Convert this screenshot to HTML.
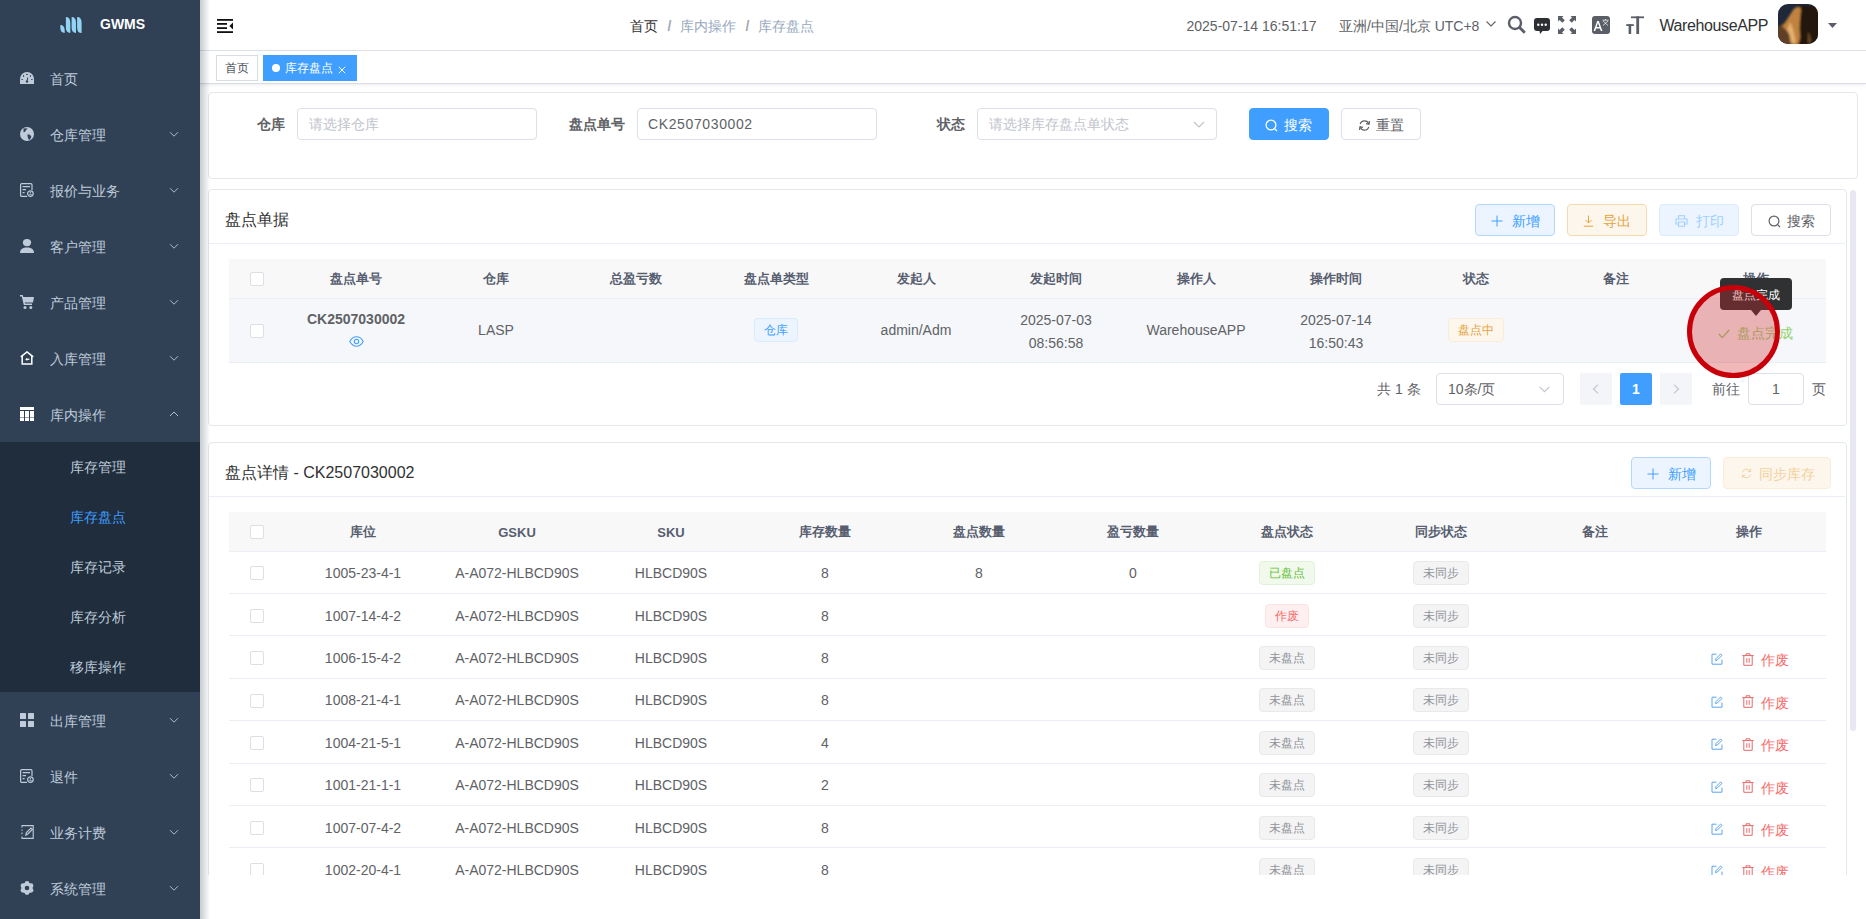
<!DOCTYPE html>
<html><head><meta charset="utf-8">
<style>
*{box-sizing:border-box;margin:0;padding:0}
html,body{width:1866px;height:919px;overflow:hidden;background:#fff;font-family:"Liberation Sans",sans-serif;font-size:14px;color:#606266}
.abs{position:absolute}
#side{position:absolute;left:0;top:0;width:200px;height:919px;background:#304156;z-index:5}
#side .logo{position:absolute;left:0;top:0;width:200px;height:50px}
.mi{position:absolute;left:0;width:200px;height:56px;color:#bfcbd9;font-size:14px}
.mi .ic{position:absolute;left:20px;top:21px;width:14px;height:14px}
.mi .tx{position:absolute;left:50px;top:1px;line-height:56px}
.mi .ch{position:absolute;left:170px;top:24px;width:9px;height:6px}
.sub{position:absolute;left:0;top:442px;width:200px;height:250px;background:#1f2d3d}
.si{position:absolute;left:70px;width:120px;height:50px;line-height:50px;color:#bfcbd9}
#shadow{position:absolute;left:200px;top:0;width:10px;height:919px;background:linear-gradient(to right,rgba(0,21,41,.22),rgba(0,21,41,0));z-index:4}
#nav{position:absolute;left:200px;top:0;width:1666px;height:51px;background:#fff;border-bottom:1px solid #dfe3ea}
#tags{position:absolute;left:200px;top:51px;width:1666px;height:33px;background:#fff;border-bottom:1px solid #d8dce5;box-shadow:0 1px 3px 0 rgba(0,0,0,.08)}
.tag{position:absolute;top:4px;height:26px;line-height:24px;border:1px solid #d8dce5;font-size:12px;color:#495060;padding:0 8px;background:#fff}
.card{position:absolute;background:#fff;border:1px solid #e5e7eb;border-radius:4px}
.lbl{position:absolute;font-weight:bold;color:#606266;font-size:14px;line-height:32px}
.inp{position:absolute;height:32px;border:1px solid #dcdfe6;border-radius:4px;line-height:30px;padding-left:11px;font-size:14px;color:#606266}
.ph{color:#c0c4cc}
.btn{position:absolute;height:32px;border-radius:4px;border:1px solid #dcdfe6;font-size:14px;line-height:30px;padding-top:1px;text-align:center;color:#606266;background:#fff}
table{border-collapse:collapse;table-layout:fixed}
td,th{text-align:center;font-size:14px;color:#606266;font-weight:normal}
th{font-weight:bold;color:#575e6f;font-size:13px;padding-top:2px}
.tg{display:inline-block;height:24px;line-height:22px;padding:0 9px;font-size:12px;border:1px solid;border-radius:4px}
.cb{display:inline-block;position:relative;left:-1px;width:14px;height:14px;border:1px solid #dcdfe6;border-radius:2px;background:#fff;vertical-align:middle}
.r3 td{padding-top:2px}
.r3 td:last-child{padding-top:0}
th .cb,.r3 .cb{top:-1px}
</style></head><body>
<div id="side">
  <div class="logo">
    <svg class="abs" style="left:60px;top:17px" width="22" height="16" viewBox="0 0 22 16" fill="#93d3f3"><path d="M0.3 8 Q4.7 8 4.7 13.72 L4.7 16 Q0.3 16 0.3 10.28 Z"/><path d="M5.9 0 Q10.3 0 10.3 5.720000000000001 L10.3 16 Q5.9 16 5.9 10.28 Z"/><path d="M11.6 0 Q16.0 0 16.0 5.720000000000001 L16.0 16 Q11.6 16 11.6 10.28 Z"/><path d="M17.1 0 Q21.6 0 21.6 5.8500000000000005 L21.6 16 Q17.1 16 17.1 10.149999999999999 Z"/></svg>
    <div class="abs" style="left:100px;top:16px;font-size:14px;font-weight:bold;color:#fff;line-height:16px">GWMS</div>
  </div>
  <div class="mi" style="top:50px"><svg class="abs" style="left:20px;top:22px" width="14" height="12" viewBox="0 0 14 12"><path d="M0 12 V7 A7 7 0 0 1 14 7 V12 Z" fill="#bfcbd9"/><g fill="#304156"><ellipse cx="7" cy="2.4" rx="0.9" ry="0.6"/><ellipse cx="3.6" cy="4" rx="0.6" ry="0.9"/><ellipse cx="10.4" cy="4" rx="0.6" ry="0.9"/><ellipse cx="2.1" cy="7.5" rx="0.9" ry="0.6"/><ellipse cx="11.9" cy="7.5" rx="0.9" ry="0.6"/><circle cx="7" cy="9.6" r="1.2"/><path d="M6.4 9.6 L7.4 5.2 L8.2 5.4 L7.6 9.8 Z"/></g></svg><div class="tx">首页</div></div>
  <div class="mi" style="top:106px"><svg class="abs" style="left:20px;top:21px" width="14" height="14" viewBox="0 0 14 14"><circle cx="7" cy="7" r="7" fill="#bfcbd9"/><path d="M3.4 1.6 L7.6 1.2 L6 3.2 L5 4.8 L3.6 5.4 Z" fill="#304156"/><path d="M7.4 7.6 L9.5 7.4 L11.3 9.2 L10.4 12 L9 13 L7.8 10.6 Z" fill="#304156"/></svg><div class="tx">仓库管理</div><svg class="abs" style="left:169px;top:25px" width="10" height="6" viewBox="0 0 10 6"><path d="M1 1.2 L5 5.2 L9 1.2" stroke="#bfcbd9" stroke-width="0.9" fill="none"/></svg></div>
  <div class="mi" style="top:162px"><svg class="abs" style="left:20px;top:21px" width="14" height="14" viewBox="0 0 14 14" fill="none" stroke="#bfcbd9" stroke-width="1.2"><path d="M7 13.4 H1.8 A1.2 1.2 0 0 1 0.6 12.2 V1.8 A1.2 1.2 0 0 1 1.8 0.6 H10.8 A1.2 1.2 0 0 1 12 1.8 V7"/><path d="M2.6 3.6 H10 M2.6 6.6 H6 M2.6 9.6 H4.6"/><circle cx="10.4" cy="10.6" r="2.8"/><circle cx="10.4" cy="9.8" r="0.8" fill="#bfcbd9" stroke="none"/><path d="M8.8 12.2 A1.8 1.4 0 0 1 12 12.2" stroke-width="0.9"/></svg><div class="tx">报价与业务</div><svg class="abs" style="left:169px;top:25px" width="10" height="6" viewBox="0 0 10 6"><path d="M1 1.2 L5 5.2 L9 1.2" stroke="#bfcbd9" stroke-width="0.9" fill="none"/></svg></div>
  <div class="mi" style="top:218px"><svg class="abs" style="left:20px;top:21px" width="14" height="14" viewBox="0 0 14 14" fill="#bfcbd9"><ellipse cx="7" cy="3.6" rx="4.1" ry="3.6"/><path d="M0 14 C0 10 3 8.4 7 8.4 C11 8.4 14 10 14 14 Z"/></svg><div class="tx">客户管理</div><svg class="abs" style="left:169px;top:25px" width="10" height="6" viewBox="0 0 10 6"><path d="M1 1.2 L5 5.2 L9 1.2" stroke="#bfcbd9" stroke-width="0.9" fill="none"/></svg></div>
  <div class="mi" style="top:274px"><svg class="abs" style="left:20px;top:21px" width="14" height="14" viewBox="0 0 14 14" fill="#bfcbd9"><path d="M0 0 H2.6 L3.4 2 H14 L13 7.4 H4.8 L5 8.6 H12 V10 H3.8 L1.8 1.4 H0 Z"/><circle cx="5" cy="12.4" r="1.5"/><circle cx="10.8" cy="12.4" r="1.5"/></svg><div class="tx">产品管理</div><svg class="abs" style="left:169px;top:25px" width="10" height="6" viewBox="0 0 10 6"><path d="M1 1.2 L5 5.2 L9 1.2" stroke="#bfcbd9" stroke-width="0.9" fill="none"/></svg></div>
  <div class="mi" style="top:330px"><svg class="abs" style="left:20px;top:21px" width="14" height="14" viewBox="0 0 14 14" fill="none" stroke="#fff" stroke-width="1.5"><path d="M0.8 5.8 L7 0.9 L13.2 5.8"/><path d="M2.2 4.8 V13 H11.8 V4.8"/><path d="M5.2 8.3 L7.2 6.7 V9.9 Z" fill="#fff" stroke="none"/><path d="M7 8.3 H9.4" stroke-width="1.2"/></svg><div class="tx">入库管理</div><svg class="abs" style="left:169px;top:25px" width="10" height="6" viewBox="0 0 10 6"><path d="M1 1.2 L5 5.2 L9 1.2" stroke="#bfcbd9" stroke-width="0.9" fill="none"/></svg></div>
  <div class="mi" style="top:386px"><svg class="abs" style="left:20px;top:21px" width="14" height="14" viewBox="0 0 14 14" fill="#fff"><rect x="0" y="0" width="14" height="3"/><rect x="0" y="4" width="4" height="6"/><rect x="5" y="4" width="4" height="6"/><rect x="10" y="4" width="4" height="6"/><rect x="0" y="10.5" width="4" height="3.5"/><rect x="5" y="10.5" width="4" height="3.5"/><rect x="10" y="10.5" width="4" height="3.5"/></svg><div class="tx">库内操作</div><svg class="abs" style="left:169px;top:25px" width="10" height="6" viewBox="0 0 10 6"><path d="M1 5 L5 1 L9 5" stroke="#bfcbd9" stroke-width="0.9" fill="none"/></svg></div>
  <div class="sub">
    <div class="si" style="top:0">库存管理</div>
    <div class="si" style="top:50px;color:#409eff">库存盘点</div>
    <div class="si" style="top:100px">库存记录</div>
    <div class="si" style="top:150px">库存分析</div>
    <div class="si" style="top:200px">移库操作</div>
  </div>
  <div class="mi" style="top:692px"><svg class="abs" style="left:20px;top:21px" width="14" height="14" viewBox="0 0 14 14" fill="#bfcbd9"><rect x="0" y="0" width="6" height="6" rx="0.6"/><rect x="8" y="0" width="6" height="6" rx="0.6"/><rect x="0" y="8" width="6" height="6" rx="0.6"/><rect x="8" y="8" width="6" height="6" rx="0.6"/></svg><div class="tx">出库管理</div><svg class="abs" style="left:169px;top:25px" width="10" height="6" viewBox="0 0 10 6"><path d="M1 1.2 L5 5.2 L9 1.2" stroke="#bfcbd9" stroke-width="0.9" fill="none"/></svg></div>
  <div class="mi" style="top:748px"><svg class="abs" style="left:20px;top:21px" width="14" height="14" viewBox="0 0 14 14" fill="none" stroke="#bfcbd9" stroke-width="1.2"><path d="M7 13.4 H1.8 A1.2 1.2 0 0 1 0.6 12.2 V1.8 A1.2 1.2 0 0 1 1.8 0.6 H10.8 A1.2 1.2 0 0 1 12 1.8 V7"/><path d="M2.6 3.6 H10 M2.6 6.6 H6 M2.6 9.6 H4.6"/><circle cx="10.4" cy="10.6" r="2.8"/><circle cx="10.4" cy="9.8" r="0.8" fill="#bfcbd9" stroke="none"/><path d="M8.8 12.2 A1.8 1.4 0 0 1 12 12.2" stroke-width="0.9"/></svg><div class="tx">退件</div><svg class="abs" style="left:169px;top:25px" width="10" height="6" viewBox="0 0 10 6"><path d="M1 1.2 L5 5.2 L9 1.2" stroke="#bfcbd9" stroke-width="0.9" fill="none"/></svg></div>
  <div class="mi" style="top:804px"><svg class="abs" style="left:21px;top:21px" width="13" height="14" viewBox="0 0 13 14" fill="none" stroke="#bfcbd9" stroke-width="1.1"><path d="M1 2.5 V0.6 H12.2 V13.4 H1 V11.5"/><path d="M1 4.5 V5.8 M1 7.6 V9.2"/><path d="M4.8 10.2 L5.4 7.6 L10 3 L11.4 4.4 L6.8 9 Z"/></svg><div class="tx">业务计费</div><svg class="abs" style="left:169px;top:25px" width="10" height="6" viewBox="0 0 10 6"><path d="M1 1.2 L5 5.2 L9 1.2" stroke="#bfcbd9" stroke-width="0.9" fill="none"/></svg></div>
  <div class="mi" style="top:860px"><svg class="abs" style="left:20px;top:21px" width="14" height="14" viewBox="0 0 14 14"><defs><mask id="gm"><circle cx="7" cy="7" r="5.6" fill="#fff"/><circle cx="7.00" cy="11.60" r="2.4" fill="#fff"/><circle cx="3.02" cy="9.30" r="2.4" fill="#fff"/><circle cx="3.02" cy="4.70" r="2.4" fill="#fff"/><circle cx="7.00" cy="2.40" r="2.4" fill="#fff"/><circle cx="10.98" cy="4.70" r="2.4" fill="#fff"/><circle cx="10.98" cy="9.30" r="2.4" fill="#fff"/><circle cx="7" cy="7" r="2.3" fill="#000"/></mask></defs><rect width="14" height="14" fill="#bfcbd9" mask="url(#gm)"/></svg><div class="tx">系统管理</div><svg class="abs" style="left:169px;top:25px" width="10" height="6" viewBox="0 0 10 6"><path d="M1 1.2 L5 5.2 L9 1.2" stroke="#bfcbd9" stroke-width="0.9" fill="none"/></svg></div>
</div>
<div id="shadow"></div>
<div id="nav">
  <svg class="abs" style="left:17px;top:19px" width="16" height="14" viewBox="0 0 16 14"><rect x="0" y="0" width="16" height="1.8" fill="#111"/><rect x="0" y="4" width="10" height="1.8" fill="#111"/><rect x="0" y="8.2" width="10" height="1.8" fill="#111"/><rect x="0" y="12.2" width="16" height="1.8" fill="#111"/><path d="M16 3.6 L12.4 7 L16 10.4 Z" fill="#111"/></svg>
  <div class="abs" style="left:430px;top:18px;line-height:16px;font-size:14px;white-space:nowrap"><span style="color:#303133">首页</span><span style="color:#a4a8ae;font-weight:bold;margin:0 9px 0 9.5px">/</span><span style="color:#97a8be">库内操作</span><span style="color:#a4a8ae;font-weight:bold;margin:0 9px">/</span><span style="color:#97a8be">库存盘点</span></div>
  <div class="abs" style="left:986.5px;top:18px;line-height:16px;font-size:14px;color:#606266;white-space:nowrap">2025-07-14 16:51:17</div>
  <div class="abs" style="left:1139px;top:18px;line-height:16px;font-size:14px;color:#606266;white-space:nowrap">亚洲/中国/北京 UTC+8</div>
  <svg class="abs" style="left:1286px;top:21px" width="10" height="6" viewBox="0 0 10 6"><path d="M0.5 0.5 L5 5 L9.5 0.5" stroke="#606266" stroke-width="1.1" fill="none"/></svg>
  <svg class="abs" style="left:1307px;top:15px" width="20" height="20" viewBox="0 0 20 20"><circle cx="8" cy="8" r="6" stroke="#5a5e66" stroke-width="2.4" fill="none"/><path d="M12.3 12.3 L17.8 17.8" stroke="#5a5e66" stroke-width="2.8" stroke-linecap="butt"/></svg>
  <svg class="abs" style="left:1334px;top:18px" width="16" height="16" viewBox="0 0 16 16"><rect x="0" y="0" width="16" height="13" rx="3" fill="#2d2f33"/><path d="M5.5 12.5 L6 16 L9 12.5 Z" fill="#2d2f33"/><circle cx="4.3" cy="6.8" r="1.2" fill="#fff"/><circle cx="8" cy="6.8" r="1.2" fill="#fff"/><circle cx="11.7" cy="6.8" r="1.2" fill="#fff"/></svg>
  <svg class="abs" style="left:1358px;top:16px" width="18" height="18" viewBox="0 0 18 18" fill="#5a5e66"><path d="M0 0 H5.5 L4 1.5 L6.8 4.3 L4.3 6.8 L1.5 4 L0 5.5 Z"/><path d="M18 0 V5.5 L16.5 4 L13.7 6.8 L11.2 4.3 L14 1.5 L12.5 0 Z"/><path d="M0 18 V12.5 L1.5 14 L4.3 11.2 L6.8 13.7 L4 16.5 L5.5 18 Z"/><path d="M18 18 H12.5 L14 16.5 L11.2 13.7 L13.7 11.2 L16.5 14 L18 12.5 Z"/></svg>
  <svg class="abs" style="left:1392px;top:16px" width="18" height="18" viewBox="0 0 18 18"><rect x="0" y="0" width="18" height="18" rx="3" fill="#5a5e66"/><path d="M1.6 15 L5.2 5 L6.8 5 L10.4 15 L8.8 15 L7.9 12.4 L4.1 12.4 L3.2 15 Z M4.6 11 L7.4 11 L6 7 Z" fill="#fff"/><path d="M10.5 4.2 H16.5 M13.5 3 V4.2 M11 5 L16 9.5 M16 5 L11 9.5" stroke="#fff" stroke-width="0.7" fill="none"/></svg>
  <svg class="abs" style="left:1425px;top:16px" width="20" height="18" viewBox="0 0 20 18" fill="#5a5e66"><rect x="6" y="0.4" width="13" height="1.8"/><rect x="11.3" y="0.4" width="2.8" height="17.6"/><rect x="1.2" y="8.2" width="7.6" height="1.8"/><rect x="3.6" y="8.2" width="2.6" height="9.8"/></svg>
  <div class="abs" style="left:1459.5px;top:17px;line-height:18px;font-size:16px;letter-spacing:-0.4px;color:#303133;white-space:nowrap">WarehouseAPP</div>
  <svg class="abs" style="left:1578px;top:4px" width="40" height="40" viewBox="0 0 40 40"><defs><clipPath id="avc"><rect width="40" height="40" rx="10"/></clipPath><filter id="avb" x="-20%" y="-20%" width="140%" height="140%"><feGaussianBlur stdDeviation="1.3"/></filter></defs><g clip-path="url(#avc)"><rect width="40" height="40" fill="#1f2838"/><g filter="url(#avb)"><path d="M-2 24 L6 19 L16 6 L24 2 L42 2 L42 42 L-2 42 Z" fill="#5e4026"/><path d="M19 2 L42 2 L42 42 L20 42 Z" fill="#22170e"/><path d="M15 6 C18 2 23 2 23 6 C22 14 21 22 22 32 C22 38 20 42 16 42 L12 38 C12 32 11 28 8 26 L4 22 L7 19 Z" fill="#c0823f"/><path d="M12 18 C15 22 16 30 18 38 L14 40 C13 34 11 28 9 26 Z" fill="#e6b070"/><path d="M30 28 C32 30 33 34 33 38 L30 40 Z" fill="#6a4a26"/></g></g></g></svg>
  <svg class="abs" style="left:1628px;top:23px" width="9" height="5" viewBox="0 0 9 5"><path d="M0 0 H9 L4.5 5 Z" fill="#5a5e66"/></svg>
</div>
<div id="tags">
  <div class="tag" style="left:16px">首页</div>
  <div class="tag" style="left:63px;width:94px;background:#409eff;border-color:#409eff;color:#fff;padding-left:21px">库存盘点<span class="abs" style="left:8px;top:8px;width:8px;height:8px;border-radius:50%;background:#fff"></span><svg class="abs" style="left:74px;top:9.5px" width="8" height="8" viewBox="0 0 8 8"><path d="M0.8 0.8 L7.2 7.2 M7.2 0.8 L0.8 7.2" stroke="#fff" stroke-width="1"/></svg></div>
</div>
<div class="card" style="left:208px;top:92px;width:1650px;height:87px">
  <div class="lbl" style="left:48px;top:15px">仓库</div>
  <div class="inp ph" style="left:88px;top:15px;width:240px">请选择仓库</div>
  <div class="lbl" style="left:360px;top:15px">盘点单号</div>
  <div class="inp" style="left:428px;top:15px;width:240px;padding-left:10px;letter-spacing:0.62px">CK2507030002</div>
  <div class="lbl" style="left:728px;top:15px">状态</div>
  <div class="inp ph" style="left:768px;top:15px;width:240px">请选择库存盘点单状态<svg class="abs" style="left:215px;top:12px" width="12" height="7" viewBox="0 0 12 7"><path d="M1 1 L6 6 L11 1" stroke="#c0c4cc" stroke-width="1.2" fill="none"/></svg></div>
  <div class="btn" style="left:1040px;top:15px;width:80px;background:#409eff;border-color:#409eff;color:#fff"><svg style="vertical-align:-2px;margin-right:6px;margin-left:-1px" width="13" height="13" viewBox="0 0 13 13"><circle cx="6" cy="6" r="4.9" stroke="#fff" stroke-width="1.3" fill="none"/><path d="M9.6 9.6 L12 12" stroke="#fff" stroke-width="1.3"/></svg>搜索</div>
  <div class="btn" style="left:1132px;top:15px;width:80px"><svg style="vertical-align:-2px;margin-right:5px" width="13" height="13" viewBox="0 0 13 13"><path d="M2.2 5.2 A4.5 4.5 0 0 1 10.8 5" stroke="#606266" stroke-width="1.2" fill="none"/><path d="M10.8 7.8 A4.5 4.5 0 0 1 2.2 8" stroke="#606266" stroke-width="1.2" fill="none"/><path d="M11.5 2 L11 5.3 L8 4.6" stroke="#606266" stroke-width="1.2" fill="none"/><path d="M1.5 11 L2 7.7 L5 8.4" stroke="#606266" stroke-width="1.2" fill="none"/></svg>重置</div>
</div>
<div id="scroll" class="abs" style="left:208px;top:189px;width:1649px;height:686px;overflow:hidden">
  <div class="abs" style="left:1642px;top:1px;width:6px;height:541px;border-radius:3px;background:#e7e8f1"></div>
  <div class="card" style="left:0;top:0;width:1639px;height:237px">
  <div class="abs" style="left:16px;top:20px;font-size:16px;line-height:20px;color:#303133">盘点单据</div>
  <div class="abs" style="left:0;top:53px;width:1636px;height:1px;background:#ebeef5"></div>
  <div class="btn" style="left:1266px;top:14px;width:80px;background:#ecf5ff;border-color:#b3d8ff;color:#409eff"><svg style="vertical-align:-1px;margin-right:9px" width="12" height="12" viewBox="0 0 12 12"><path d="M6 0.5 V11.5 M0.5 6 H11.5" stroke="#409eff" stroke-width="1" fill="none"/></svg>新增</div>
  <div class="btn" style="left:1358px;top:14px;width:80px;background:#fdf6ec;border-color:#f5dab1;color:#e6a23c"><svg style="vertical-align:-1px;margin-right:9px" width="11" height="12" viewBox="0 0 11 12"><path d="M5.5 0.5 V8 M2.5 5 L5.5 8 L8.5 5 M0.8 11.2 H10.2" stroke="#e6a23c" stroke-width="1" fill="none"/></svg>导出</div>
  <div class="btn" style="left:1450px;top:14px;width:80px;background:#ecf5ff;border-color:#d9ecff;color:#a0cfff"><svg style="vertical-align:-1px;margin-right:8px" width="13" height="12" viewBox="0 0 13 12"><path d="M3.5 4 V0.8 H9.5 V4 M3.5 9 H1 V4 H12 V9 H9.5 M3.5 7 H9.5 V11.3 H3.5 Z" stroke="#a0cfff" stroke-width="1.1" fill="none"/></svg>打印</div>
  <div class="btn" style="left:1542px;top:14px;width:80px"><svg style="vertical-align:-2px;margin-right:6px" width="13" height="13" viewBox="0 0 13 13"><circle cx="6" cy="6" r="4.9" stroke="#606266" stroke-width="1.2" fill="none"/><path d="M9.6 9.6 L12 12" stroke="#606266" stroke-width="1.2"/></svg>搜索</div>
  <table class="abs" style="left:20px;top:69px;width:1597px">
    <colgroup><col style="width:57px"><col style="width:140px"><col style="width:140px"><col style="width:140px"><col style="width:140px"><col style="width:140px"><col style="width:140px"><col style="width:140px"><col style="width:140px"><col style="width:140px"><col style="width:140px"><col style="width:140px"></colgroup>
    <tr style="height:39px;background:#f8f8f9"><th><span class="cb"></span></th><th>盘点单号</th><th>仓库</th><th>总盈亏数</th><th>盘点单类型</th><th>发起人</th><th>发起时间</th><th>操作人</th><th>操作时间</th><th>状态</th><th>备注</th><th>操作</th></tr>
    <tr style="height:64px;background:#f5f7fa;border-top:1px solid #ebeef5;border-bottom:1px solid #ebeef5">
      <td><span class="cb"></span></td>
      <td style="padding-top:2px"><div style="font-weight:bold;line-height:16px;color:#606266;position:relative;top:-5px">CK2507030002</div><svg style="display:block;margin:4px auto 0" width="15" height="11" viewBox="0 0 15 11"><path d="M0.8 5.5 C3 1.5 5.2 0.8 7.5 0.8 C9.8 0.8 12 1.5 14.2 5.5 C12 9.5 9.8 10.2 7.5 10.2 C5.2 10.2 3 9.5 0.8 5.5 Z" stroke="#409eff" stroke-width="1.1" fill="none"/><circle cx="7.5" cy="5.5" r="2.2" stroke="#409eff" stroke-width="1.1" fill="none"/></svg></td>
      <td>LASP</td>
      <td></td>
      <td><span class="tg" style="background:#ecf5ff;border-color:#d9ecff;color:#409eff">仓库</span></td>
      <td>admin/Adm</td>
      <td style="line-height:23px;padding-top:3px">2025-07-03<br>08:56:58</td>
      <td>WarehouseAPP</td>
      <td style="line-height:23px;padding-top:3px">2025-07-14<br>16:50:43</td>
      <td><span class="tg" style="background:#fdf6ec;border-color:#faecd8;color:#e6a23c">盘点中</span></td>
      <td></td>
      <td></td>
    </tr>
  </table>
  <div class="abs" style="left:1168px;top:189px;line-height:20px;font-size:14px;color:#606266">共 1 条</div>
  <div class="inp" style="left:1227px;top:183px;width:128px;height:32px;font-size:14px">10条/页<svg class="abs" style="left:102px;top:12px" width="11" height="7" viewBox="0 0 11 7"><path d="M0.6 0.8 L5.5 5.7 L10.4 0.8" stroke="#c0c4cc" stroke-width="1.1" fill="none"/></svg></div>
  <div class="abs" style="left:1371px;top:183px;width:32px;height:32px;border-radius:2px;background:#f4f5f8"><svg class="abs" style="left:12px;top:11px" width="7" height="10" viewBox="0 0 7 10"><path d="M6 0.6 L1.4 5 L6 9.4" stroke="#c0c4cc" stroke-width="1.1" fill="none"/></svg></div>
  <div class="abs" style="left:1411px;top:183px;width:32px;height:32px;border-radius:2px;background:#409eff;color:#fff;font-weight:bold;text-align:center;line-height:32px;font-size:14px">1</div>
  <div class="abs" style="left:1451px;top:183px;width:32px;height:32px;border-radius:2px;background:#f4f5f8"><svg class="abs" style="left:13px;top:11px" width="7" height="10" viewBox="0 0 7 10"><path d="M1 0.6 L5.6 5 L1 9.4" stroke="#c0c4cc" stroke-width="1.1" fill="none"/></svg></div>
  <div class="abs" style="left:1503px;top:189px;line-height:20px;font-size:14px;color:#606266">前往</div>
  <div class="inp" style="left:1539px;top:183px;width:56px;height:32px;text-align:center;padding:0">1</div>
  <div class="abs" style="left:1603px;top:189px;line-height:20px;font-size:14px;color:#606266">页</div>
</div>
  <div class="card" style="left:0;top:253px;width:1639px;height:600px">
  <div class="abs" style="left:16px;top:20px;font-size:16px;line-height:20px;color:#303133">盘点详情 - CK2507030002</div>
  <div class="abs" style="left:0;top:53px;width:1636px;height:1px;background:#ebeef5"></div>
  <div class="btn" style="left:1422px;top:14px;width:80px;background:#ecf5ff;border-color:#b3d8ff;color:#409eff"><svg style="vertical-align:-1px;margin-right:9px" width="12" height="12" viewBox="0 0 12 12"><path d="M6 0.5 V11.5 M0.5 6 H11.5" stroke="#409eff" stroke-width="1" fill="none"/></svg>新增</div>
  <div class="btn" style="left:1514px;top:14px;width:108px;background:#fdf6ec;border-color:#faecd8;color:#f3d19e"><svg style="vertical-align:0px;margin-left:1px;margin-right:7px" width="11" height="11" viewBox="0 0 11 11"><path d="M1.2 4.4 A4.4 4.4 0 0 1 9.2 3.2" stroke="#f3d19e" stroke-width="1" fill="none"/><path d="M9.8 6.6 A4.4 4.4 0 0 1 1.8 7.8" stroke="#f3d19e" stroke-width="1" fill="none"/><path d="M9.6 0.8 V3.6 H6.8" stroke="#f3d19e" stroke-width="1" fill="none"/><path d="M1.4 10.2 V7.4 H4.2" stroke="#f3d19e" stroke-width="1" fill="none"/></svg>同步库存</div>
  <table class="abs" style="left:20px;top:69px;width:1597px">
    <colgroup><col style="width:57px"><col style="width:154px"><col style="width:154px"><col style="width:154px"><col style="width:154px"><col style="width:154px"><col style="width:154px"><col style="width:154px"><col style="width:154px"><col style="width:154px"><col style="width:154px"></colgroup>
    <tr style="height:39px;background:#f8f8f9;border-bottom:1px solid #ebeef5"><th><span class="cb"></span></th><th>库位</th><th style="font-weight:bold">GSKU</th><th style="font-weight:bold">SKU</th><th>库存数量</th><th>盘点数量</th><th>盈亏数量</th><th>盘点状态</th><th>同步状态</th><th>备注</th><th>操作</th></tr>
    <tr class="r3" style="height:42.43px;border-bottom:1px solid #ebeef5"><td><span class="cb"></span></td><td>1005-23-4-1</td><td>A-A072-HLBCD90S</td><td>HLBCD90S</td><td>8</td><td>8</td><td>0</td><td><span class="tg" style="background:#f0f9eb;border-color:#e1f3d8;color:#67c23a">已盘点</span></td><td><span class="tg" style="background:#f4f4f5;border-color:#e9e9eb;color:#909399">未同步</span></td><td></td><td style="text-align:left;padding:0;vertical-align:top;white-space:nowrap"></td></tr><tr class="r3" style="height:42.43px;border-bottom:1px solid #ebeef5"><td><span class="cb"></span></td><td>1007-14-4-2</td><td>A-A072-HLBCD90S</td><td>HLBCD90S</td><td>8</td><td></td><td></td><td><span class="tg" style="background:#fef0f0;border-color:#fde2e2;color:#f56c6c">作废</span></td><td><span class="tg" style="background:#f4f4f5;border-color:#e9e9eb;color:#909399">未同步</span></td><td></td><td style="text-align:left;padding:0;vertical-align:top;white-space:nowrap"></td></tr><tr class="r3" style="height:42.43px;border-bottom:1px solid #ebeef5"><td><span class="cb"></span></td><td>1006-15-4-2</td><td>A-A072-HLBCD90S</td><td>HLBCD90S</td><td>8</td><td></td><td></td><td><span class="tg" style="background:#f4f4f5;border-color:#e9e9eb;color:#909399">未盘点</span></td><td><span class="tg" style="background:#f4f4f5;border-color:#e9e9eb;color:#909399">未同步</span></td><td></td><td style="text-align:left;padding:0;vertical-align:top;white-space:nowrap"><div style="position:relative;height:40px"><svg class="abs" style="left:38.5px;top:17px" width="12" height="12" viewBox="0 0 12 12"><path d="M5.5 1.2 H1 V11.2 H11 V6.6" stroke="#5aa5f0" stroke-width="1" fill="none"/><path d="M4.6 7.6 L5 5.6 L9.6 1 L11 2.4 L6.4 7 Z" stroke="#5aa5f0" stroke-width="1" fill="none"/></svg><svg class="abs" style="left:70px;top:16.5px" width="12" height="13" viewBox="0 0 12 13"><path d="M0.3 2.6 H11.7 M4 2.6 V0.8 H8 V2.6 M1.8 2.6 V12.3 H10.2 V2.6 M4.8 5.2 V9.8 M7.2 5.2 V9.8" stroke="#e46a6a" stroke-width="1" fill="none"/></svg><span class="abs" style="left:88.5px;top:16px;line-height:16px;color:#f56c6c">作废</span></div></td></tr><tr class="r3" style="height:42.43px;border-bottom:1px solid #ebeef5"><td><span class="cb"></span></td><td>1008-21-4-1</td><td>A-A072-HLBCD90S</td><td>HLBCD90S</td><td>8</td><td></td><td></td><td><span class="tg" style="background:#f4f4f5;border-color:#e9e9eb;color:#909399">未盘点</span></td><td><span class="tg" style="background:#f4f4f5;border-color:#e9e9eb;color:#909399">未同步</span></td><td></td><td style="text-align:left;padding:0;vertical-align:top;white-space:nowrap"><div style="position:relative;height:40px"><svg class="abs" style="left:38.5px;top:17px" width="12" height="12" viewBox="0 0 12 12"><path d="M5.5 1.2 H1 V11.2 H11 V6.6" stroke="#5aa5f0" stroke-width="1" fill="none"/><path d="M4.6 7.6 L5 5.6 L9.6 1 L11 2.4 L6.4 7 Z" stroke="#5aa5f0" stroke-width="1" fill="none"/></svg><svg class="abs" style="left:70px;top:16.5px" width="12" height="13" viewBox="0 0 12 13"><path d="M0.3 2.6 H11.7 M4 2.6 V0.8 H8 V2.6 M1.8 2.6 V12.3 H10.2 V2.6 M4.8 5.2 V9.8 M7.2 5.2 V9.8" stroke="#e46a6a" stroke-width="1" fill="none"/></svg><span class="abs" style="left:88.5px;top:16px;line-height:16px;color:#f56c6c">作废</span></div></td></tr><tr class="r3" style="height:42.43px;border-bottom:1px solid #ebeef5"><td><span class="cb"></span></td><td>1004-21-5-1</td><td>A-A072-HLBCD90S</td><td>HLBCD90S</td><td>4</td><td></td><td></td><td><span class="tg" style="background:#f4f4f5;border-color:#e9e9eb;color:#909399">未盘点</span></td><td><span class="tg" style="background:#f4f4f5;border-color:#e9e9eb;color:#909399">未同步</span></td><td></td><td style="text-align:left;padding:0;vertical-align:top;white-space:nowrap"><div style="position:relative;height:40px"><svg class="abs" style="left:38.5px;top:17px" width="12" height="12" viewBox="0 0 12 12"><path d="M5.5 1.2 H1 V11.2 H11 V6.6" stroke="#5aa5f0" stroke-width="1" fill="none"/><path d="M4.6 7.6 L5 5.6 L9.6 1 L11 2.4 L6.4 7 Z" stroke="#5aa5f0" stroke-width="1" fill="none"/></svg><svg class="abs" style="left:70px;top:16.5px" width="12" height="13" viewBox="0 0 12 13"><path d="M0.3 2.6 H11.7 M4 2.6 V0.8 H8 V2.6 M1.8 2.6 V12.3 H10.2 V2.6 M4.8 5.2 V9.8 M7.2 5.2 V9.8" stroke="#e46a6a" stroke-width="1" fill="none"/></svg><span class="abs" style="left:88.5px;top:16px;line-height:16px;color:#f56c6c">作废</span></div></td></tr><tr class="r3" style="height:42.43px;border-bottom:1px solid #ebeef5"><td><span class="cb"></span></td><td>1001-21-1-1</td><td>A-A072-HLBCD90S</td><td>HLBCD90S</td><td>2</td><td></td><td></td><td><span class="tg" style="background:#f4f4f5;border-color:#e9e9eb;color:#909399">未盘点</span></td><td><span class="tg" style="background:#f4f4f5;border-color:#e9e9eb;color:#909399">未同步</span></td><td></td><td style="text-align:left;padding:0;vertical-align:top;white-space:nowrap"><div style="position:relative;height:40px"><svg class="abs" style="left:38.5px;top:17px" width="12" height="12" viewBox="0 0 12 12"><path d="M5.5 1.2 H1 V11.2 H11 V6.6" stroke="#5aa5f0" stroke-width="1" fill="none"/><path d="M4.6 7.6 L5 5.6 L9.6 1 L11 2.4 L6.4 7 Z" stroke="#5aa5f0" stroke-width="1" fill="none"/></svg><svg class="abs" style="left:70px;top:16.5px" width="12" height="13" viewBox="0 0 12 13"><path d="M0.3 2.6 H11.7 M4 2.6 V0.8 H8 V2.6 M1.8 2.6 V12.3 H10.2 V2.6 M4.8 5.2 V9.8 M7.2 5.2 V9.8" stroke="#e46a6a" stroke-width="1" fill="none"/></svg><span class="abs" style="left:88.5px;top:16px;line-height:16px;color:#f56c6c">作废</span></div></td></tr><tr class="r3" style="height:42.43px;border-bottom:1px solid #ebeef5"><td><span class="cb"></span></td><td>1007-07-4-2</td><td>A-A072-HLBCD90S</td><td>HLBCD90S</td><td>8</td><td></td><td></td><td><span class="tg" style="background:#f4f4f5;border-color:#e9e9eb;color:#909399">未盘点</span></td><td><span class="tg" style="background:#f4f4f5;border-color:#e9e9eb;color:#909399">未同步</span></td><td></td><td style="text-align:left;padding:0;vertical-align:top;white-space:nowrap"><div style="position:relative;height:40px"><svg class="abs" style="left:38.5px;top:17px" width="12" height="12" viewBox="0 0 12 12"><path d="M5.5 1.2 H1 V11.2 H11 V6.6" stroke="#5aa5f0" stroke-width="1" fill="none"/><path d="M4.6 7.6 L5 5.6 L9.6 1 L11 2.4 L6.4 7 Z" stroke="#5aa5f0" stroke-width="1" fill="none"/></svg><svg class="abs" style="left:70px;top:16.5px" width="12" height="13" viewBox="0 0 12 13"><path d="M0.3 2.6 H11.7 M4 2.6 V0.8 H8 V2.6 M1.8 2.6 V12.3 H10.2 V2.6 M4.8 5.2 V9.8 M7.2 5.2 V9.8" stroke="#e46a6a" stroke-width="1" fill="none"/></svg><span class="abs" style="left:88.5px;top:16px;line-height:16px;color:#f56c6c">作废</span></div></td></tr><tr class="r3" style="height:42.43px;border-bottom:1px solid #ebeef5"><td><span class="cb"></span></td><td>1002-20-4-1</td><td>A-A072-HLBCD90S</td><td>HLBCD90S</td><td>8</td><td></td><td></td><td><span class="tg" style="background:#f4f4f5;border-color:#e9e9eb;color:#909399">未盘点</span></td><td><span class="tg" style="background:#f4f4f5;border-color:#e9e9eb;color:#909399">未同步</span></td><td></td><td style="text-align:left;padding:0;vertical-align:top;white-space:nowrap"><div style="position:relative;height:40px"><svg class="abs" style="left:38.5px;top:17px" width="12" height="12" viewBox="0 0 12 12"><path d="M5.5 1.2 H1 V11.2 H11 V6.6" stroke="#5aa5f0" stroke-width="1" fill="none"/><path d="M4.6 7.6 L5 5.6 L9.6 1 L11 2.4 L6.4 7 Z" stroke="#5aa5f0" stroke-width="1" fill="none"/></svg><svg class="abs" style="left:70px;top:16.5px" width="12" height="13" viewBox="0 0 12 13"><path d="M0.3 2.6 H11.7 M4 2.6 V0.8 H8 V2.6 M1.8 2.6 V12.3 H10.2 V2.6 M4.8 5.2 V9.8 M7.2 5.2 V9.8" stroke="#e46a6a" stroke-width="1" fill="none"/></svg><span class="abs" style="left:88.5px;top:16px;line-height:16px;color:#f56c6c">作废</span></div></td></tr>
  </table>
</div>
</div>

<div class="abs" style="left:1720px;top:278px;width:72px;height:32px;background:#303133;border-radius:4px;color:#fff;font-size:12px;line-height:32px;padding-top:1px;text-align:center;z-index:10">盘点完成</div>
<div class="abs" style="left:1750.5px;top:309.5px;width:0;height:0;border-left:5.5px solid transparent;border-right:5.5px solid transparent;border-top:6px solid #303133;z-index:10"></div>
<div class="abs" style="left:1718px;top:324px;line-height:18px;font-size:14px;color:#95d475;white-space:nowrap;z-index:9"><svg style="vertical-align:-1px;margin-right:7px" width="12" height="10" viewBox="0 0 12 10"><path d="M0.8 5 L4.3 8.6 L11.2 1" stroke="#95d475" stroke-width="1.3" fill="none"/></svg>盘点完成</div>
<div class="abs" style="left:1687px;top:285px;width:93px;height:93px;border-radius:50%;border:5px solid #c8000a;background:rgba(210,40,40,0.33);z-index:11"></div>
</body></html>
